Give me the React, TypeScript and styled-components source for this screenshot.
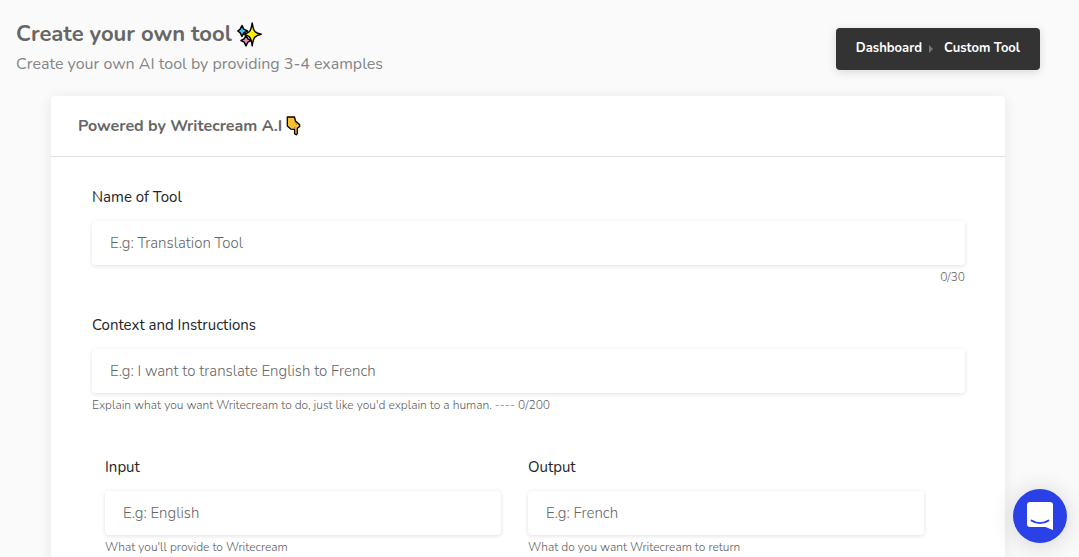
import React from 'react';
import styled, { createGlobalStyle } from 'styled-components';

const GlobalStyle = createGlobalStyle`
  *, *::before, *::after { box-sizing: border-box; }
  html { scrollbar-width: none; }
  body {
    margin: 0;
    background: #fafafa;
    color: #212121;
    font-family: Nunito, Lato, sans-serif;
    font-size: 15px;
  }
`;

const Page = styled.main`
  padding: 20px 0 40px;
`;

const PageHeader = styled.header`
  display: flex;
  justify-content: space-between;
  align-items: flex-start;
  padding: 0 39px 0 16px;
`;

const Title = styled.h1`
  display: flex;
  align-items: center;
  gap: 5px;
  margin: 0;
  color: #666;
  font-size: 22px;
  line-height: 28px;
  font-weight: 700;
`;

const Subtitle = styled.p`
  margin: 4px 0 0;
  color: #868686;
  font-size: 16px;
  line-height: 24px;
`;

const Breadcrumb = styled.nav`
  display: flex;
  align-items: center;
  height: 42px;
  margin-top: 8px;
  padding: 0 20px 3px;
  border-radius: 4px;
  background: #333;
  box-shadow: 0 2px 10px rgba(0, 0, 0, 0.14);
  white-space: nowrap;
`;

const Crumb = styled.a`
  color: #fff;
  font-size: 13px;
  line-height: 20px;
  font-weight: 700;
  text-decoration: none;
`;

const CrumbArrow = styled.svg`
  margin: 2px 11px 0 7px;
`;

const Card = styled.section`
  margin: 20px 74px 0 51px;
  border-radius: 4px;
  background: #fff;
  box-shadow: 0 2px 14px rgba(0, 0, 0, 0.08);
`;

const CardHeader = styled.h2`
  display: flex;
  align-items: center;
  gap: 4px;
  height: 61px;
  margin: 0;
  padding: 0 27px;
  border-bottom: 1px solid #e0e0e0;
  color: #666;
  font-size: 16px;
  line-height: 24px;
  font-weight: 700;
`;

const Form = styled.form`
  padding: 30px 40px 80px 41px;
`;

const Field = styled.div<{ $after?: number }>`
  display: flex;
  flex-direction: column;
  margin-bottom: ${({ $after = 0 }) => $after}px;
`;

const Label = styled.label`
  margin-bottom: 14px;
  color: #212529;
  font-size: 15px;
  line-height: 20px;
  font-weight: 400;
`;

const TextInput = styled.input`
  width: 100%;
  height: 44px;
  padding: 0 18px;
  border: 0;
  border-radius: 4px;
  background: #fff;
  box-shadow: 0 1px 4px rgba(0, 0, 0, 0.13);
  color: #333;
  font-family: inherit;
  font-size: 15px;
  font-weight: 300;

  &::placeholder { color: #666; opacity: 1; }
`;

const Help = styled.small<{ $right?: boolean }>`
  margin-top: 4px;
  color: #5c5c5c;
  font-size: 12px;
  line-height: 16px;
  font-weight: 300;
  text-align: ${({ $right }) => ($right ? 'right' : 'left')};
`;

const Examples = styled.div`
  display: grid;
  grid-template-columns: 1fr 1fr;
  gap: 27px;
  padding: 0 41px 0 13px;
`;

const ChatButton = styled.button`
  position: fixed;
  right: 12px;
  bottom: 14px;
  display: flex;
  align-items: center;
  justify-content: center;
  width: 54px;
  height: 54px;
  padding: 0;
  border: 0;
  border-radius: 50%;
  background: #2a41e8;
  box-shadow: 0 2px 24px rgba(0, 0, 0, 0.16);
  cursor: pointer;
`;

const Sparkles = () => (
  <svg width="25" height="25" viewBox="0 0 25 25" aria-hidden="true">
    <g stroke="#000" strokeWidth="1.5" strokeLinejoin="round">
      <path d="M5 3.500 L6.8 7.2 L10.500 9 L6.8 10.8 L5 14.500 L3.2 10.8 L0.8 9 L3.2 7.2Z" fill="#3cc3ec" />
      <path d="M9 13.500 L10.8 16.8 L14 18.5 L10.8 20.2 L9 23.800 L7.2 20.2 L4 18.5 L7.2 16.8Z" fill="#f48fb8" />
      <path d="M15.200 1 Q16.200 8 18.200 9.800 Q20 11.300 24.200 12.300 Q20 13.300 18.200 14.800 Q16.200 16.600 15.200 23.800 Q14.200 16.600 12.200 14.800 Q10.500 13.300 6.600 12.300 Q10.500 11.300 12.200 9.800 Q14.200 8 15.200 1Z" fill="#fff100" />
    </g>
  </svg>
);

const PointDown = () => (
  <svg width="15" height="20" viewBox="0 0 15 20" aria-hidden="true">
    <path
      d="M1.3 1H8.5L9.5 5L13.7 8.7V10.4L11.3 12.3V17.6L10.2 18.8L8.6 17.7V13.4L5 13.2L1.3 10Z"
      fill="#fbc132"
      stroke="#000"
      strokeWidth="1.3"
      strokeLinejoin="round"
    />
    <path d="M8.7 13V10.5M8.5 5.5L11 9" fill="none" stroke="#a66b10" strokeWidth="0.8" />
  </svg>
);

type TextFieldProps = {
  id: string;
  label: string;
  placeholder: string;
  help: string;
  maxLength?: number;
  helpRight?: boolean;
  after?: number;
};

const TextField = ({ id, label, placeholder, help, maxLength, helpRight, after }: TextFieldProps) => (
  <Field $after={after}>
    <Label htmlFor={id}>{label}</Label>
    <TextInput id={id} type="text" placeholder={placeholder} maxLength={maxLength} aria-describedby={`${id}-help`} />
    <Help id={`${id}-help`} $right={helpRight}>{help}</Help>
  </Field>
);

export default function App() {
  return (
    <>
      <GlobalStyle />
      <Page>
        <PageHeader>
          <div>
            <Title>Create your own tool <Sparkles /></Title>
            <Subtitle>Create your own AI tool by providing 3-4 examples</Subtitle>
          </div>
          <Breadcrumb aria-label="Breadcrumb">
            <Crumb href="#dashboard">Dashboard</Crumb>
            <CrumbArrow width="4" height="8" viewBox="0 0 4 8" aria-hidden="true">
              <path d="M0 0L4 4L0 8Z" fill="#777" />
            </CrumbArrow>
            <Crumb href="#custom-tool">Custom Tool</Crumb>
          </Breadcrumb>
        </PageHeader>
        <Card>
          <CardHeader>Powered by Writecream A.I <PointDown /></CardHeader>
          <Form>
            <TextField id="name" label="Name of Tool" placeholder="E.g: Translation Tool" help="0/30" maxLength={30} helpRight after={30} />
            <TextField
              id="context"
              label="Context and Instructions"
              placeholder="E.g: I want to translate English to French"
              help="Explain what you want Writecream to do, just like you'd explain to a human. ---- 0/200"
              maxLength={200}
              after={44}
            />
            <Examples>
              <TextField id="input" label="Input" placeholder="E.g: English" help="What you'll provide to Writecream" />
              <TextField id="output" label="Output" placeholder="E.g: French" help="What do you want Writecream to return" />
            </Examples>
          </Form>
        </Card>
      </Page>
      <ChatButton type="button" aria-label="Open chat">
        <svg width="26" height="28" viewBox="0 0 26 28" aria-hidden="true">
          <path d="M3 0H23A3 3 0 0 1 26 3V28L18.500 25H3A3 3 0 0 1 0 22V3A3 3 0 0 1 3 0Z" fill="#fff" />
          <path d="M4.500 18.500C9 22 17 22 21.500 18.500" fill="none" stroke="#2a41e8" strokeWidth="1.8" strokeLinecap="round" />
        </svg>
      </ChatButton>
    </>
  );
}
